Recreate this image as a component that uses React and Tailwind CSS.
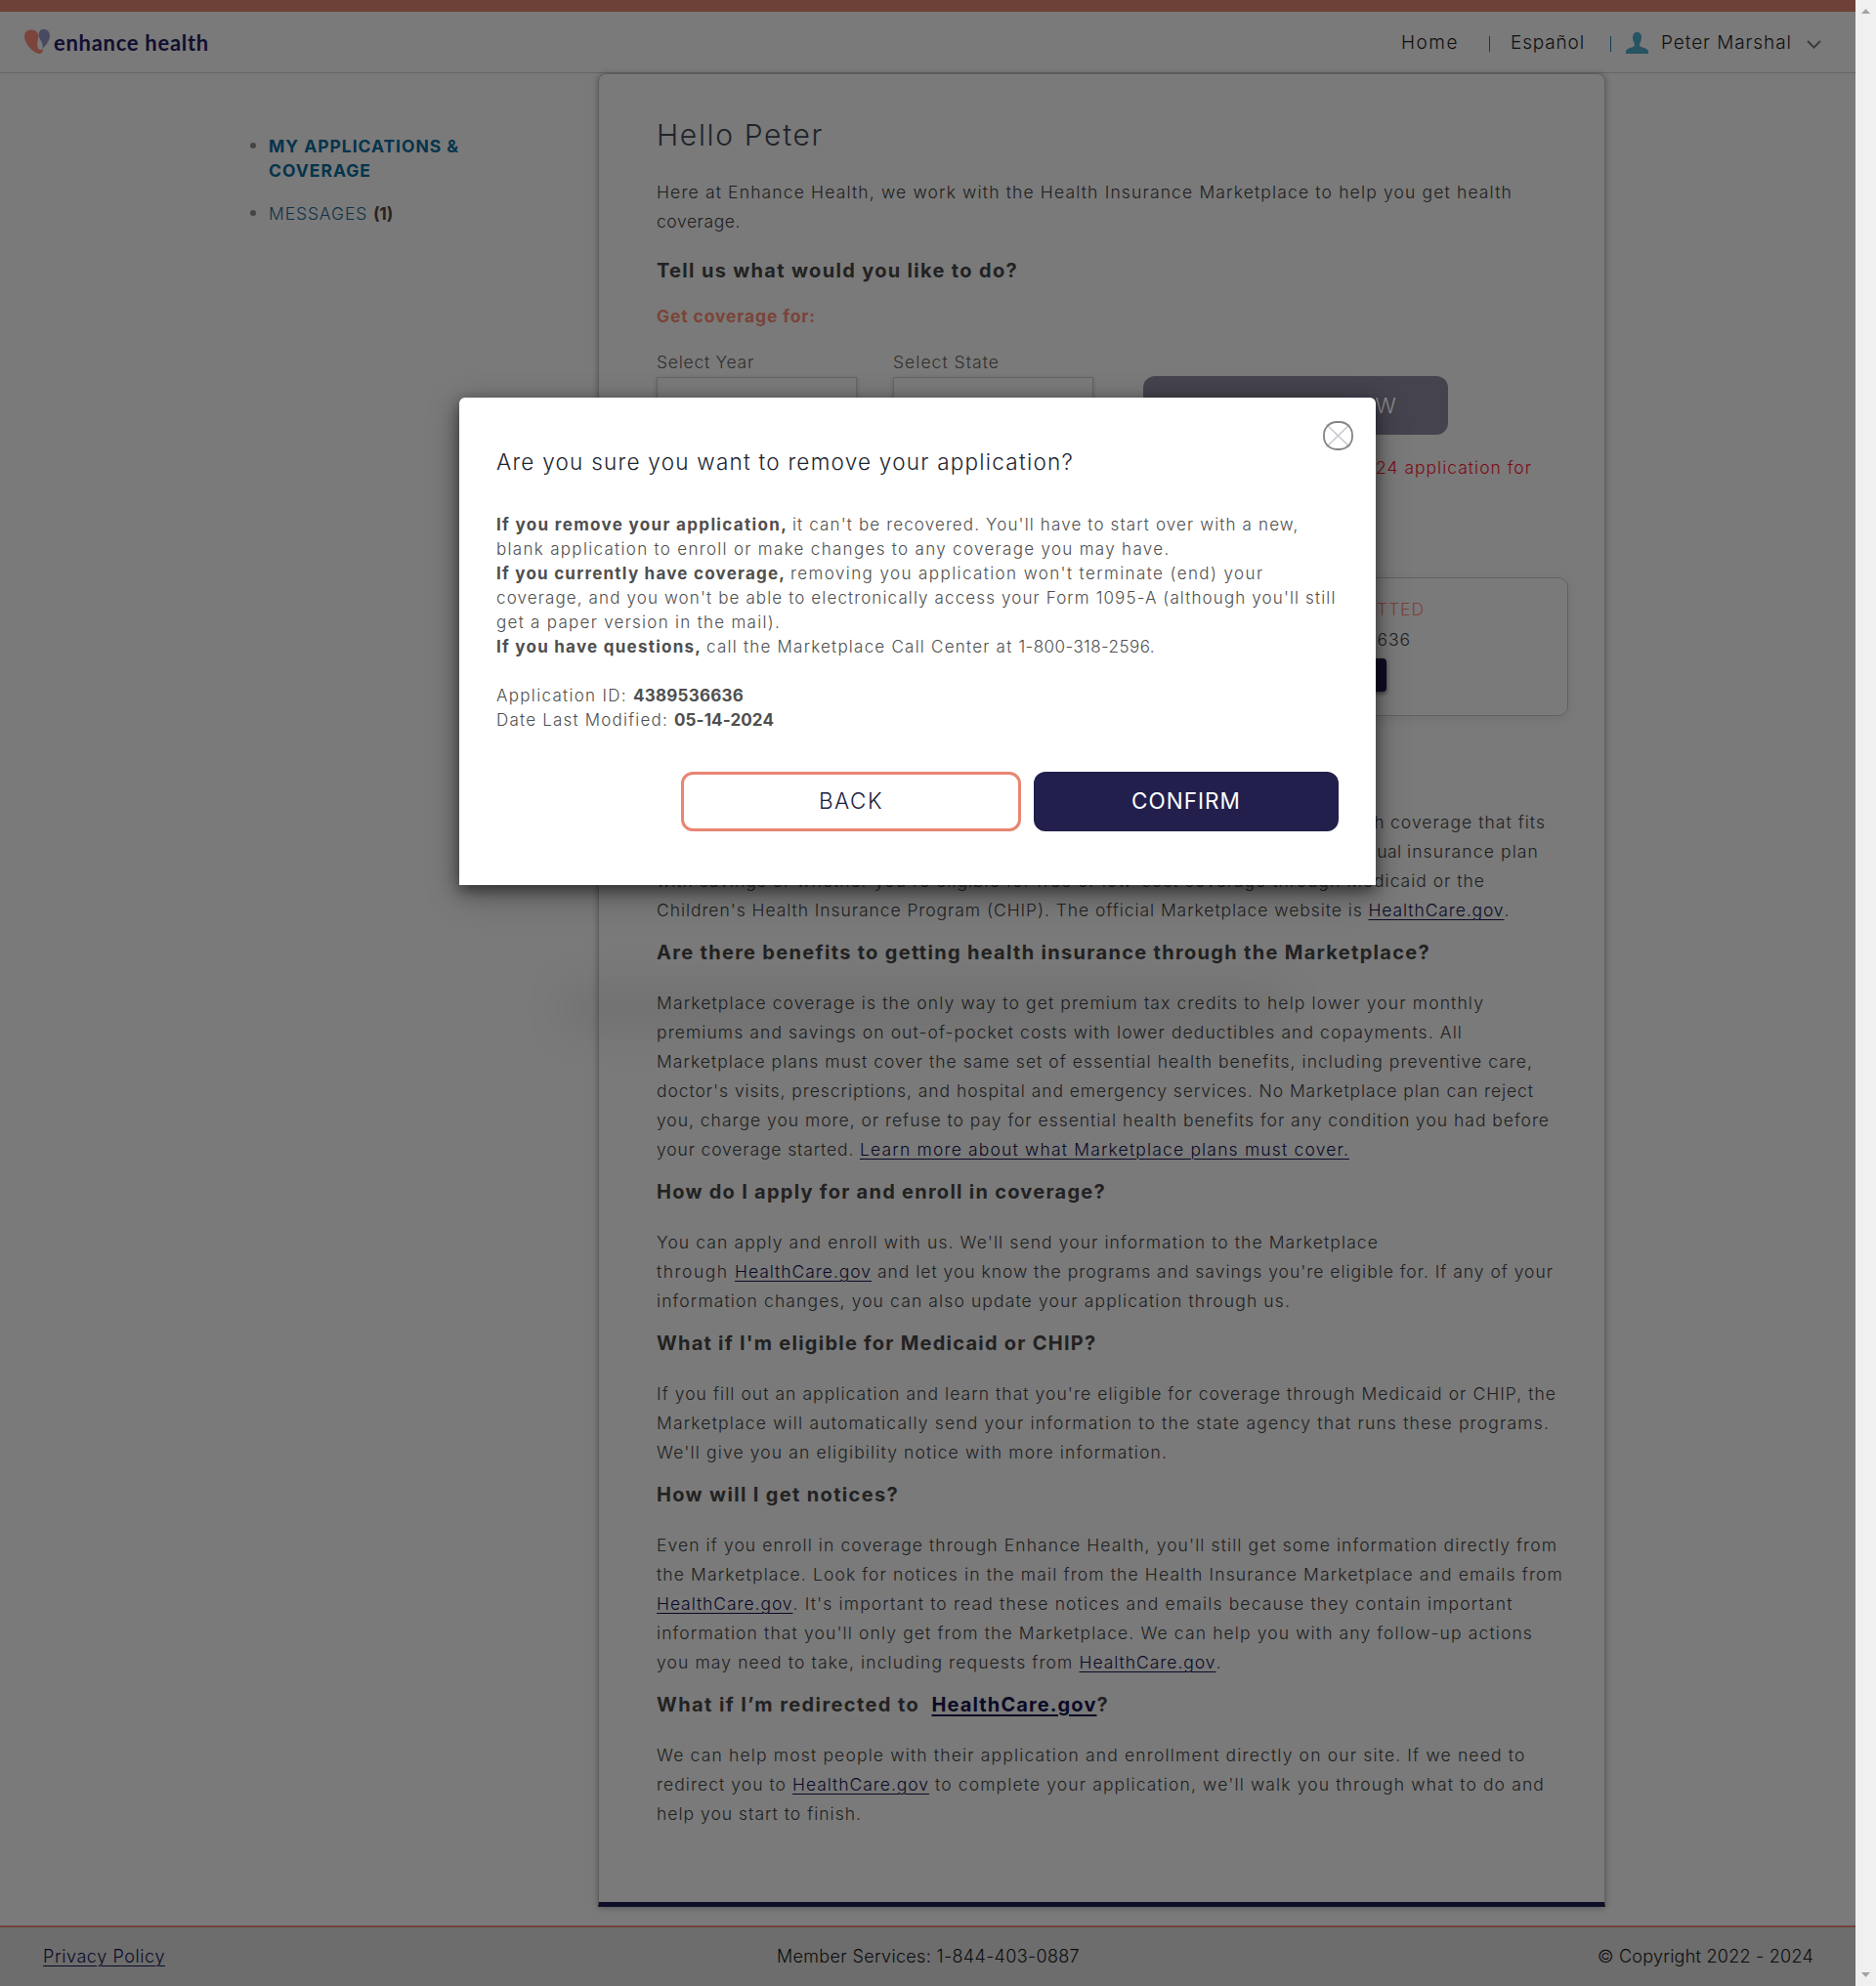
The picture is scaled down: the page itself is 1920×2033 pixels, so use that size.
import { useLayoutEffect, useRef } from "react";

// Tracks text out (or in) so that it spans exactly `w` pixels.
function T({ w, className = "", children }) {
  const ref = useRef(null);
  useLayoutEffect(() => {
    const el = ref.current;
    el.style.letterSpacing = "0px";
    el.style.width = "max-content";
    const natural = el.getBoundingClientRect().width;
    el.style.letterSpacing = `${(w - natural) / children.length}px`;
    el.style.width = `${w}px`;
  }, [w, children]);
  return (
    <span ref={ref} className={`inline-block shrink-0 whitespace-pre [font-variant-ligatures:none] ${className}`}>
      {children}
    </span>
  );
}

const LINK = "text-[#0b0a26] underline decoration-1 underline-offset-[3px]";

// A line is a list of [text, width, isLink] runs.
function Lines({ lines }) {
  return lines.map((runs, i) => (
    <div key={i} className="flex h-[30px] leading-[30px]">
      {runs.map(([text, w, link], j) => (
        <T key={j} w={w} className={link ? LINK : ""}>{text}</T>
      ))}
    </div>
  ));
}

function Heading({ runs }) {
  return (
    <h3 className="flex h-[30px] text-[20px] font-bold leading-[30px] text-[#222]">
      {runs.map(([text, w, link], j) => (
        <T key={j} w={w} className={link ? "text-[#0b0a26] underline decoration-2 underline-offset-[3px]" : ""}>{text}</T>
      ))}
    </h3>
  );
}

const SECTIONS = [
  {
    head: [["Are there benefits to getting health insurance through the Marketplace?", 792]],
    lines: [
      [["Marketplace coverage is the only way to get premium tax credits to help lower your monthly", 847]],
      [["premiums and savings on out-of-pocket costs with lower deductibles and copayments. All", 825]],
      [["Marketplace plans must cover the same set of essential health benefits, including preventive care,", 897]],
      [["doctor's visits, prescriptions, and hospital and emergency services. No Marketplace plan can reject", 898]],
      [["you, charge you more, or refuse to pay for essential health benefits for any condition you had before", 914]],
      [["your coverage started. ", 208], ["Learn more about what Marketplace plans must cover.", 501, true]],
    ],
  },
  {
    head: [["How do I apply for and enroll in coverage?", 460]],
    lines: [
      [["You can apply and enroll with us. We'll send your information to the Marketplace", 739]],
      [["through ", 80], ["HealthCare.gov", 140, true], [" and let you know the programs and savings you're eligible for. If any of your", 698]],
      [["information changes, you can also update your application through us.", 649]],
    ],
  },
  {
    head: [["What if I'm eligible for Medicaid or CHIP?", 450.5]],
    lines: [
      [["If you fill out an application and learn that you're eligible for coverage through Medicaid or CHIP, the", 921]],
      [["Marketplace will automatically send your information to the state agency that runs these programs.", 914]],
      [["We'll give you an eligibility notice with more information.", 523]],
    ],
  },
  {
    head: [["How will I get notices?", 248]],
    lines: [
      [["Even if you enroll in coverage through Enhance Health, you'll still get some information directly from", 922]],
      [["the Marketplace. Look for notices in the mail from the Health Insurance Marketplace and emails from", 928]],
      [["HealthCare.gov", 139.5, true], [". It's important to read these notices and emails because they contain important", 737]],
      [["information that you'll only get from the Marketplace. We can help you with any follow-up actions", 897]],
      [["you may need to take, including requests from ", 432.5], ["HealthCare.gov", 140, true], [".", 4]],
    ],
  },
  {
    head: [["What if I’m redirected to  ", 281.5], ["HealthCare.gov", 169, true], ["?", 11]],
    lines: [
      [["We can help most people with their application and enrollment directly on our site. If we need to", 889.5]],
      [["redirect you to ", 139], ["HealthCare.gov", 140, true], [" to complete your application, we'll walk you through what to do and", 630]],
      [["help you start to finish.", 210]],
    ],
  },
];

function Logo() {
  return (
    <div className="flex items-start">
      <svg width="26" height="26" viewBox="0 0 26 26" className="mt-[18px]">
        <path d="M6.500.6C2.500.6 0 3.500 0 7.500C0 14 7.500 23 14 24.800C17.800 25.600 19.300 23 18.800 19.800C17.500 21.800 14 21.400 13.300 17.500C12.600 13 15 9.500 14.200 5.500C13.200 2 10.500.6 6.500.6Z" fill="#7b453d" />
        <path d="M19.500 0C16 0 14 3.500 15 7.500C16.200 11.500 19.500 14 18.500 19.500C22 16.500 26 11.500 26 6.500C26 2.500 23.500 0 19.500 0Z" fill="#474a61" />
      </svg>
      <span className="ml-[4px] mt-[18px] font-[Lato] text-[22px] font-bold leading-[28px] text-[#120e30]">
        <T w={159}>enhance health</T>
      </span>
    </div>
  );
}

function Header() {
  return (
    <header className="flex h-[75px] justify-between border-b border-t-12 border-b-[#646464] border-t-[#6d4137] pl-[25px] pr-[35px]">
      <Logo />
      <nav className="flex items-start pt-[18px] text-[19px] font-light leading-[28px] text-[#101010]">
        <T w={59}>Home</T>
        <span className="ml-[31px] mt-[7px] h-4 w-px bg-[#233543]" />
        <T w={76} className="ml-[21px]">Español</T>
        <span className="ml-[26px] mt-[7px] h-4 w-px bg-[#123a55]" />
        <svg width="23" height="22" viewBox="0 0 23 22" className="ml-[15px] mt-[3px]">
          <path d="M11.500 0C14.500 0 16 2 16 5.500C16 8 15 10.500 14.200 11.500V14C15 15.500 22 15.800 23 19.500V22H0V19.500C1 15.800 8 15.500 8.800 14V11.500C8 10.500 7 8 7 5.500C7 2 8.500 0 11.500 0Z" fill="#265463" />
        </svg>
        <T w={134} className="ml-[13px]">Peter Marshal</T>
        <svg width="15" height="9" viewBox="0 0 15 9" fill="none" className="ml-[15px] mt-[11px]">
          <path d="M1 1L7.500 7.500L14 1" stroke="#3d3d3d" strokeWidth="2" />
        </svg>
      </nav>
    </header>
  );
}

function Sidebar() {
  return (
    <ul className="w-[612px] shrink-0 pl-[256px] pt-[62px] text-[17.500px] leading-[25px]">
      <li className="flex gap-[13px]">
        <span className="mt-[9px] size-[6px] rounded-full bg-[#454545]" />
        <div className="flex flex-col font-bold text-[#04344c]">
          <T w={195}>MY APPLICATIONS &amp;</T>
          <T w={105}>COVERAGE</T>
        </div>
      </li>
      <li className="mt-[19px] flex gap-[13px]">
        <span className="mt-[9px] size-[6px] rounded-full bg-[#454545]" />
        <div className="flex">
          <T w={107} className="font-light text-[#0f3349]">{"MESSAGES "}</T>
          <T w={20} className="font-bold text-[#2a2222]">(1)</T>
        </div>
      </li>
    </ul>
  );
}

function SelectField({ label, w, value }) {
  return (
    <div className="flex w-[205px] shrink-0 flex-col text-[#2f2f2f]">
      <T w={w} className="h-[20px] leading-[22px]">{label}</T>
      <div className="mt-[6px] h-[59px] border border-[#656565] px-4 pt-[19px] leading-[24px] shadow-[0_1px_4px_rgba(0,0,0,0.2)]">{value}</div>
    </div>
  );
}

function MainCard() {
  return (
    <main className="h-[1877px] w-[1031px] rounded-t-[8px] border border-b-5 border-[#5e5e5e] border-b-[#0f0e28] pl-[59px] pr-[37px] pt-[46px] text-[17.500px] font-light text-[#202020] shadow-[0_1px_7px_rgba(0,0,0,0.3)]">
      <h1 className="-mt-[2px] h-[36px] text-[30px] leading-[36px] text-[#1f2329]">
        <T w={171}>Hello Peter</T>
      </h1>
      <div className="mt-[26px]">
        <Lines lines={[[["Here at Enhance Health, we work with the Health Insurance Marketplace to help you get health", 876]], [["coverage.", 86]]]} />
      </div>
      <div className="mt-[20px]"><Heading runs={[["Tell us what would you like to do?", 370]]} /></div>
      <div className="mt-[17px] flex h-[30px] font-bold leading-[30px] text-[#7b4339]"><T w={163}>Get coverage for:</T></div>
      <div className="mt-[21px] flex h-[85px] items-start">
        <SelectField label="Select Year" w={100} value="2024" />
        <div className="ml-[37px]"><SelectField label="Select State" w={109} value="FL" /></div>
        <div className="ml-[51px] mt-[25px] flex h-[60px] w-[312px] shrink-0 items-center justify-center rounded-[12px] bg-[#45434e] text-[22px] text-[#8b8b88]">
          <T w={186}>GET COVERAGE NO</T><T w={23}>W</T>
        </div>
      </div>
      <div className="mt-[19px] text-[#7d0a15]">
        <Lines lines={[[["You can't start a new application for this state and year because you already have a 20", 736], ["24 application for", 160]], [["this state.", 95]]]} />
      </div>
      <section className="mt-[67px] h-[142px] w-[933px] rounded-[10px] border border-[#616161] pl-[518px] pt-[17px] shadow-[0_3px_12px_rgba(0,0,0,0.08)]">
        <div className="flex h-[31px] leading-[30px]"><T w={165}>{"Application Status: "}</T><T w={53} className="text-[#7b4339]">SUBMI</T><T w={49} className="text-[#7b4339]">TTED</T></div>
        <div className="flex h-[30px] leading-[30px]"><T w={253}>Application ID: 4389536636</T></div>
        <div className="mt-[4px] h-[34px] w-[228px] rounded-[4px] bg-[#0f0d26] text-center leading-[34px] text-[#8b8b88] shadow-[0_2px_4px_rgba(0,0,0,0.5)]">REMOVE</div>
      </section>
      <div className="mt-[43px]"><Heading runs={[["What is the Health Insurance Marketplace?", 460]]} /></div>
      <div className="mt-[21px]">
        <Lines
          lines={[
            [["The Health Insurance Marketplace (Marketplace) is designed to help you find health ", 751], ["coverage that fits", 159]],
            [["your budget and meets your needs. One application shows if you qualify for an individual ", 768], ["insurance plan", 135]],
            [["with savings or whether you're eligible for free or low-cost coverage through Medicaid or the", 848]],
            [["Children's Health Insurance Program (CHIP). The official Marketplace website is ", 728.5], ["HealthCare.gov", 139, true], [".", 4]],
          ]}
        />
      </div>
      {SECTIONS.map((s, i) => (
        <section key={i}>
          <div className="mt-[13px]"><Heading runs={s.head} /></div>
          <div className="mt-[22px]"><Lines lines={s.lines} /></div>
        </section>
      ))}
    </main>
  );
}

function Footer() {
  return (
    <footer className="flex h-[62px] items-start justify-between border-t-2 border-[#72443a] bg-[#6d6d6d] pl-[44px] pr-[43px] pt-[15px] text-[18px] font-light leading-[30px] text-[#0c0c0c]">
      <T w={125} className={LINK}>Privacy Policy</T>
      <T w={310} className="ml-[96px]">Member Services: 1-844-403-0887</T>
      <T w={221}>© Copyright 2022 - 2024</T>
    </footer>
  );
}

function Modal() {
  const rows = [
    [["If you remove your application, ", 303, true], ["it can't be recovered. You'll have to start over with a new,", 518.5]],
    [["blank application to enroll or make changes to any coverage you may have.", 689.5]],
    [["If you currently have coverage, ", 301, true], ["removing you application won't terminate (end) your", 484.5]],
    [["coverage, and you won't be able to electronically access your Form 1095-A (although you'll still", 859.5]],
    [["get a paper version in the mail).", 291]],
    [["If you have questions, ", 215, true], ["call the Marketplace Call Center at ", 319.5], ["1-800-318-2596.", 139.5]],
    [],
    [["Application ID: ", 140], ["4389536636", 113, true]],
    [["Date Last Modified: ", 182], ["05-14-2024", 102, true]],
  ];
  return (
    <div role="dialog" className="absolute left-[470px] top-[407px] h-[499px] w-[938px] rounded-t-[6px] bg-white pl-[38px] pr-[38px] pt-[50px] shadow-[0_5px_15px_rgba(0,0,0,0.5),0_10px_34px_rgba(0,0,0,0.3)]">
      <svg width="31" height="30" viewBox="0 0 31 30" fill="none" className="absolute left-[883.500px] top-[23.500px]">
        <path d="M3.500 3.500L27.500 26.500M27.500 3.500L3.500 26.500" stroke="#c6c9ce" strokeWidth="1.600" />
        <rect x="1" y="1" width="29" height="28" rx="13" stroke="#848484" strokeWidth="1.800" />
      </svg>
      <h2 className="h-[32px] text-[22.500px] font-light leading-[32px] text-[#1d2530]">
        <T w={591}>Are you sure you want to remove your application?</T>
      </h2>
      <div className="mt-[36px] text-[17px] text-[#4f4f4f]">
        {rows.map((runs, i) => (
          <div key={i} className="flex h-[25px] leading-[25px]">
            {runs.map(([text, w, bold], j) => (
              <T key={j} w={w} className={bold ? "font-bold" : "font-light"}>{text}</T>
            ))}
          </div>
        ))}
      </div>
      <div className="mt-[40px] flex justify-end gap-[13px] text-[22.500px] text-[#1c2340]">
        <button className="flex h-[61px] w-[348px] items-center justify-center rounded-[12px] border-3 border-[#e88573] pb-px font-light">
          <T w={66}>BACK</T>
        </button>
        <button className="flex h-[61px] w-[312px] items-center justify-center rounded-[12px] bg-[#221f4d] pb-px text-white">
          <T w={112}>CONFIRM</T>
        </button>
      </div>
    </div>
  );
}

export default function App() {
  return (
    <div className="relative flex h-[2033px] w-[1920px] overflow-hidden font-[Inter,sans-serif]">
      <div className="flex w-[1899px] flex-col bg-[#7a7a7a]">
        <Header />
        <div className="flex h-[1896px]">
          <Sidebar />
          <MainCard />
        </div>
        <Footer />
      </div>
      <div className="flex w-[21px] flex-col items-center justify-between bg-[#f0f0f0] pb-[9px] pr-px pt-[9px]">
        <svg width="9" height="5" viewBox="0 0 9 5"><path d="M0 5L4.500 0L9 5Z" fill="#a3a3a3" /></svg>
        <svg width="9" height="5" viewBox="0 0 9 5"><path d="M0 0H9L4.500 5Z" fill="#a3a3a3" /></svg>
      </div>
      <div className="absolute left-[575px] top-[1014px] h-[36px] w-[740px] rounded-full bg-black/9 blur-[22px]" />
      <Modal />
    </div>
  );
}
